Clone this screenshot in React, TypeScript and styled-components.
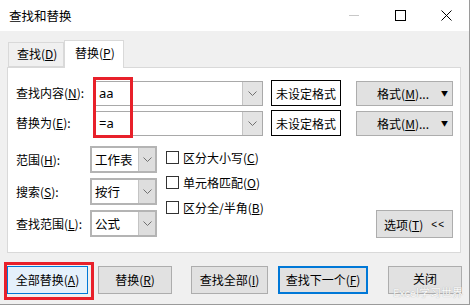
import styled, { createGlobalStyle } from "styled-components";

const Global = createGlobalStyle`
  body {
    margin: 0;
    font-family: "Noto Sans CJK SC", "Microsoft YaHei", sans-serif;
    font-size: 12px;
    color: #000;
    background: #f0f0f0;
  }
`;

const Chevron = () => (
  <svg width="9" height="5" viewBox="0 0 9 5">
    <polyline points="0.5,0.5 4.5,4.5 8.5,0.5" fill="none" stroke="#707070" strokeWidth="1" />
  </svg>
);

const Combo = ({ value, width }: { value: string; width: number }) => (
  <Input w={width}>
    <InputText>{value}</InputText>
    <DropBtn>
      <Chevron />
    </DropBtn>
  </Input>
);

const Select = ({ value }: { value: string }) => (
  <SelectBox>
    <SelectText>{value}</SelectText>
    <SelectDrop>
      <Chevron />
    </SelectDrop>
  </SelectBox>
);

const App = () => {
  return (
    <>
      <Global />
      <Window>
        <TitleBar>
          <Title>查找和替换</Title>
          <Controls>
            <Ctrl>
              <MinLine />
            </Ctrl>
            <Ctrl>
              <MaxBox />
            </Ctrl>
            <Ctrl>
              <svg width="11" height="11" viewBox="0 0 11 11">
                <path d="M0.5 0.5 L10.5 10.5 M10.5 0.5 L0.5 10.5" stroke="#000" strokeWidth="1" />
              </svg>
            </Ctrl>
          </Controls>
        </TitleBar>
        <Body>
          <Tabs>
            <Tab>
              查找(<u>D</u>)
            </Tab>
            <Tab active>
              替换(<u>P</u>)
            </Tab>
          </Tabs>
          <Panel>
            <FieldRow>
              <Label w={79}>
                查找内容(<u>N</u>):
              </Label>
              <Combo value="aa" width={168} />
              <NoFormat>未设定格式</NoFormat>
              <FormatBtn>
                格式(<u>M</u>)...
                <Caret>▼</Caret>
              </FormatBtn>
            </FieldRow>
            <FieldRow>
              <Label w={79}>
                替换为(<u>E</u>):
              </Label>
              <Combo value="=a" width={168} />
              <NoFormat>未设定格式</NoFormat>
              <FormatBtn>
                格式(<u>M</u>)...
                <Caret>▼</Caret>
              </FormatBtn>
            </FieldRow>
            <Options>
              <SelectCol>
                <SelectRow>
                  <Label w={74}>
                    范围(<u>H</u>):
                  </Label>
                  <Select value="工作表" />
                </SelectRow>
                <SelectRow>
                  <Label w={74}>
                    搜索(<u>S</u>):
                  </Label>
                  <Select value="按行" />
                </SelectRow>
                <SelectRow>
                  <Label w={74}>
                    查找范围(<u>L</u>):
                  </Label>
                  <Select value="公式" />
                </SelectRow>
              </SelectCol>
              <CheckCol>
                <CheckRow>
                  <Box />
                  区分大小写(<u>C</u>)
                </CheckRow>
                <CheckRow>
                  <Box />
                  单元格匹配(<u>O</u>)
                </CheckRow>
                <CheckRow>
                  <Box />
                  区分全/半角(<u>B</u>)
                </CheckRow>
              </CheckCol>
              <OptionBtn>
                选项(<u>T</u>)<Arrows>&lt;&lt;</Arrows>
              </OptionBtn>
            </Options>
            <Highlight style={{ left: 85, top: 9, width: 40, height: 61 }} />
          </Panel>
          <Buttons>
            <Btn w={81} primary>
              全部替换(<u>A</u>)
              <Highlight style={{ left: -4, top: -5, width: 90, height: 38 }} />
            </Btn>
            <Btn w={74} gap={10}>
              替换(<u>R</u>)
            </Btn>
            <Btn w={77} gap={19}>
              查找全部(<u>I</u>)
            </Btn>
            <Btn w={90} gap={10} focus>
              查找下一个(<u>F</u>)
            </Btn>
            <Btn w={74} gap={20} top>
              关闭
            </Btn>
          </Buttons>
        </Body>
        <Watermark>Excel学习世界</Watermark>
      </Window>
    </>
  );
};

export default App;

const Window = styled.div`
  position: relative;
  width: 470px;
  height: 305px;
  box-sizing: border-box;
  background: #f0f0f0;
  border-right: 1px solid #9a9a9a;
  border-bottom: 1px solid #9a9a9a;
  overflow: hidden;
`;

const TitleBar = styled.div`
  height: 31px;
  background: #fff;
  display: flex;
  align-items: center;
  justify-content: space-between;
`;

const Title = styled.div`
  padding-left: 9px;
  font-size: 12.5px;
  line-height: 16px;
`;

const Controls = styled.div`
  display: flex;
  height: 100%;
`;

const Ctrl = styled.div`
  width: 46px;
  height: 100%;
  display: flex;
  align-items: center;
  justify-content: center;
`;

const MinLine = styled.div`
  width: 10px;
  height: 1px;
  background: #c8c8c8;
`;

const MaxBox = styled.div`
  width: 9px;
  height: 9px;
  border: 1px solid #000;
`;

const Body = styled.div`
  padding: 9px 0 0 7px;
`;

const Tabs = styled.div`
  display: flex;
  align-items: flex-end;
  height: 27px;
  padding-left: 1px;
  position: relative;
  z-index: 1;
`;

const Tab = styled.div<{ active?: boolean }>`
  box-sizing: border-box;
  height: ${({ active }) => (active ? "28px" : "25px")};
  width: ${({ active }) => (active ? "60px" : "56px")};
  margin-bottom: ${({ active }) => (active ? "-1px" : "0")};
  padding: ${({ active }) => (active ? "3px 0 0 10px" : "2px 0 0 8px")};
  background: ${({ active }) => (active ? "#fff" : "#f0f0f0")};
  border: 1px solid #d9d9d9;
  border-bottom: ${({ active }) => (active ? "none" : "1px solid #d9d9d9")};
  font-size: 12px;
  line-height: 18px;
`;

const Panel = styled.div`
  position: relative;
  box-sizing: border-box;
  width: 454px;
  height: 186px;
  background: #fff;
  border: 1px solid #d9d9d9;
  padding: 12px 0 0 8px;
`;

const FieldRow = styled.div`
  display: flex;
  align-items: center;
  height: 26px;
  margin-bottom: 4px;
`;

const Label = styled.div<{ w: number }>`
  width: ${({ w }) => w}px;
  flex-shrink: 0;
  font-size: 12px;
  line-height: 16px;
  white-space: nowrap;
`;

const Input = styled.div<{ w: number }>`
  box-sizing: border-box;
  width: ${({ w }) => w}px;
  height: 25px;
  border: 1px solid #a9a9a9;
  display: flex;
  align-items: stretch;
`;

const InputText = styled.div`
  flex: 1;
  padding-left: 3px;
  font-family: "Microsoft YaHei", "Noto Sans", sans-serif;
  font-size: 13px;
  line-height: 23px;
`;

const DropBtn = styled.div`
  width: 19px;
  background: #e3e3e3;
  border-left: 1px solid #c4c4c4;
  display: flex;
  align-items: center;
  justify-content: center;
`;

const NoFormat = styled.div`
  box-sizing: border-box;
  margin-left: 8px;
  width: 70px;
  height: 26px;
  border: 1px solid #000;
  display: flex;
  align-items: center;
  justify-content: center;
  font-size: 12px;
`;

const FormatBtn = styled.div`
  box-sizing: border-box;
  margin-left: 15px;
  width: 97px;
  height: 25px;
  background: #e1e1e1;
  border: 1px solid #adadad;
  display: flex;
  align-items: center;
  justify-content: flex-end;
  padding-right: 4px;
  font-size: 12px;
`;

const Caret = styled.span`
  font-size: 7px;
  margin-left: 12px;
`;

const Options = styled.div`
  display: flex;
  margin-top: 10px;
  height: 92px;
`;

const SelectCol = styled.div`
  display: flex;
  flex-direction: column;
  gap: 5px;
`;

const SelectRow = styled.div`
  display: flex;
  align-items: center;
  height: 27px;
`;

const SelectBox = styled.div`
  box-sizing: border-box;
  width: 67px;
  height: 27px;
  border: 2px solid #b4b4b4;
  display: flex;
`;

const SelectText = styled.div`
  flex: 1;
  padding-left: 3px;
  font-size: 12.5px;
  line-height: 23px;
`;

const SelectDrop = styled.div`
  width: 16px;
  background: #dedede;
  border-left: 1px solid #c4c4c4;
  display: flex;
  align-items: center;
  justify-content: center;
`;

const CheckCol = styled.div`
  display: flex;
  flex-direction: column;
  gap: 9px;
  margin-left: 9px;
  padding-top: 3px;
`;

const CheckRow = styled.div`
  display: flex;
  align-items: center;
  height: 16px;
  font-size: 12px;
`;

const Box = styled.div`
  box-sizing: border-box;
  width: 13px;
  height: 13px;
  border: 1px solid #333;
  background: #fff;
  margin-right: 4px;
`;

const OptionBtn = styled.div`
  box-sizing: border-box;
  align-self: flex-end;
  margin-left: auto;
  margin-right: 7px;
  width: 77px;
  height: 28px;
  background: #e1e1e1;
  border: 1px solid #adadad;
  display: flex;
  align-items: center;
  padding-left: 7px;
  font-size: 12px;
`;

const Arrows = styled.span`
  margin-left: 8px;
  font-family: "Liberation Sans", sans-serif;
  font-size: 10px;
  letter-spacing: 1px;
`;

const Buttons = styled.div`
  display: flex;
  margin-top: 13px;
`;

const Btn = styled.div<{ w: number; gap?: number; primary?: boolean; focus?: boolean; top?: boolean }>`
  position: relative;
  box-sizing: border-box;
  width: ${({ w }) => w}px;
  height: 28px;
  margin-left: ${({ gap }) => gap ?? 0}px;
  background: ${({ primary }) => (primary ? "#e5f1fb" : "#e1e1e1")};
  border: ${({ primary, focus }) =>
    focus ? "2px solid #0078d7" : primary ? "1px solid #0078d7" : "1px solid #adadad"};
  display: flex;
  align-items: ${({ top }) => (top ? "flex-start" : "center")};
  padding-top: ${({ top }) => (top ? "4px" : "0")};
  justify-content: center;
  font-size: 12px;
  line-height: 16px;
  white-space: nowrap;
`;

const Highlight = styled.div`
  position: absolute;
  box-sizing: border-box;
  border: 3px solid #e8202a;
  pointer-events: none;
`;

const Watermark = styled.div`
  position: absolute;
  right: 6px;
  bottom: 6px;
  font-family: "Noto Sans CJK SC", sans-serif;
  font-size: 11px;
  line-height: 12px;
  color: #fafafa;
  text-shadow: 0 0 1px #9a9a9a;
`;
